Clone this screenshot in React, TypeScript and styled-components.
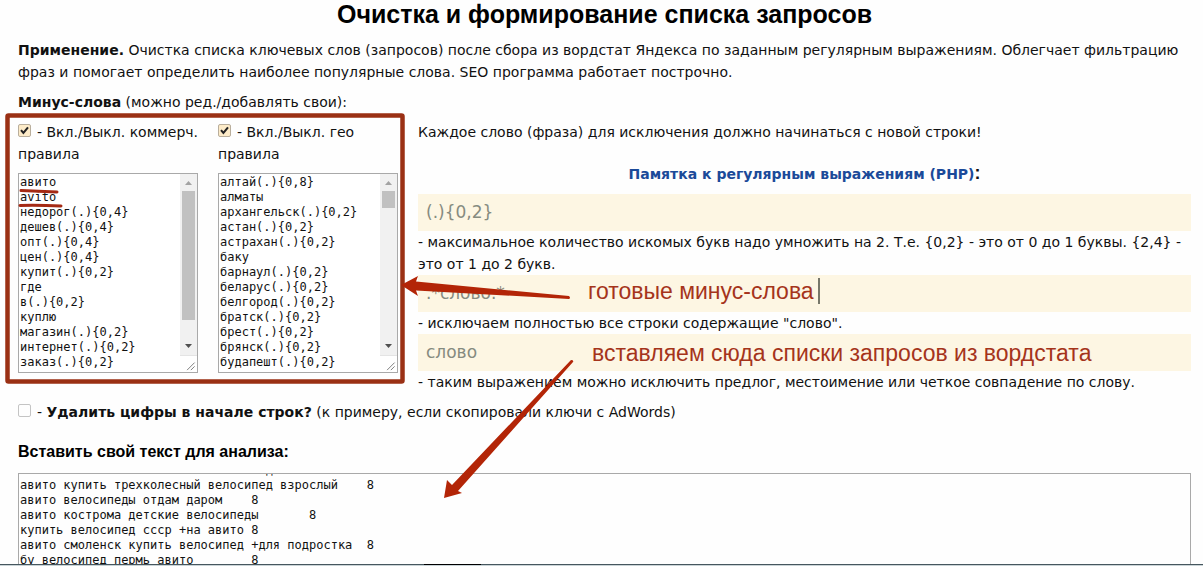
import React, { useLayoutEffect, useRef } from 'react';
import styled, { createGlobalStyle } from 'styled-components';

const GlobalStyle = createGlobalStyle`
  * { box-sizing: border-box; }
  html, body { margin: 0; padding: 0; background: #fefefe; }
  body { font-family: 'DejaVu Sans', Verdana, sans-serif; font-size: 14px; line-height: 22px; color: #111; }
`;

const Page = styled.main`
  position: relative;
  display: flex;
  flex-direction: column;
  height: 100vh;
  min-height: 500px;
  overflow: hidden;
  padding: 0 12px 0 18px;
`;

const Title = styled.h1`
  margin: 0 0 11px;
  font: bold 25px/28px 'Liberation Sans', Arial, sans-serif;
  text-align: center;
  color: #000;
`;

const Paragraph = styled.p`
  margin: 0 0 8px;
`;

const Columns = styled.div`
  display: grid;
  grid-template-columns: 200px 200px 1fr;
`;

const RuleLabel = styled.label`
  display: block;
  margin-bottom: 8px;
`;

const TickWrap = styled.span`
  position: relative;
  display: inline-block;
  width: 13px;
  height: 13px;
  margin-right: 6px;
`;

const Tick = styled.input`
  appearance: none;
  display: block;
  width: 13px;
  height: 13px;
  margin: 0;
  border: 1px solid #c4c4c4;
  border-radius: 2px;
  background: #fefefe;
  &:checked { background: #fdebc8; border-color: #b9ae9c; }
  & + svg { display: none; }
  &:checked + svg { display: block; }
`;

const TickMark = styled.svg`
  position: absolute;
  top: 0;
  left: 0;
  pointer-events: none;
`;

const ListFrame = styled.div`
  display: grid;
  grid-template-columns: 1fr 17px;
  width: 180px;
  height: 200px;
  border: 1px solid #a9a9a9;
  background: #fff;
`;

const ListText = styled.textarea`
  display: block;
  width: 100%;
  height: 100%;
  margin: 0;
  padding: 1px;
  border: 0;
  outline: 0;
  resize: none;
  overflow: hidden;
  background: transparent;
  color: #111;
  white-space: pre;
  font: 12px/15px 'DejaVu Sans Mono', monospace;
`;

const MainText = styled(ListText)`
  flex: 1;
  min-height: 90px;
  border: 1px solid #a9a9a9;
  border-bottom: 0;
`;

const Scrollbar = styled.div`
  display: flex;
  flex-direction: column;
  background: #f1f1f1;
`;

const Arrow = styled.svg`
  display: block;
  flex: none;
`;

const Track = styled.div`
  flex: 1;
  padding: 0 2px;
`;

const Thumb = styled.div<{ $size: number }>`
  height: ${(p) => p.$size}px;
  background: #c1c1c1;
`;

const Grip = styled.svg`
  display: block;
  flex: none;
  background: #fff;
  border-top: 1px solid #e4e4e4;
`;

const MemoTitle = styled.h2`
  margin: 19px 0 10px;
  font: bold 18px/22px 'Liberation Sans', Arial, sans-serif;
  text-align: center;
  a { font: bold 14px/18px 'DejaVu Sans', Verdana, sans-serif; color: #1b4a99; text-decoration: none; }
`;

const Sample = styled.code`
  display: block;
  padding: 8px;
  font: 17px/21px 'DejaVu Sans', Verdana, sans-serif;
  color: #868b80;
  background: #fdf6e3;
`;

const Note = styled.p`
  margin: 0;
`;

const StripLabel = styled.label`
  display: block;
  margin: 8px 0 18px;
`;

const TextLabel = styled.label`
  margin-bottom: 10px;
  font: bold 16px/22px 'Liberation Sans', Arial, sans-serif;
  color: #000;
`;

const Overlay = styled.svg`
  position: absolute;
  top: 0;
  left: 0;
  pointer-events: none;
  text { font: 23px 'Liberation Sans', Arial, sans-serif; fill: #a5341b; }
`;

const BottomEdge = styled.div`
  position: absolute;
  left: 0;
  right: 0;
  bottom: 0;
  height: 2px;
  border-top: 1px solid #46565e;
  background: #c9d3d6;
`;

const commerce = ['авито', 'avito', 'недорог(.){0,4}', 'дешев(.){0,4}', 'опт(.){0,4}', 'цен(.){0,4}', 'купит(.){0,2}', 'где', 'в(.){0,2}', 'куплю', 'магазин(.){0,2}', 'интернет(.){0,2}', 'заказ(.){0,2}'];
const geo = ['алтай(.){0,8}', 'алматы', 'архангельск(.){0,2}', 'астан(.){0,2}', 'астрахан(.){0,2}', 'баку', 'барнаул(.){0,2}', 'беларус(.){0,2}', 'белгород(.){0,2}', 'братск(.){0,2}', 'брест(.){0,2}', 'брянск(.){0,2}', 'будапешт(.){0,2}'];
const queries = [
  'авито мелкие и знаменитые велосипеды\t8',
  'авито купить трехколесный велосипед взрослый\t8',
  'авито велосипеды отдам даром\t8',
  'авито кострома детские велосипеды\t8',
  'купить велосипед ссср +на авито\t8',
  'авито смоленск купить велосипед +для подростка\t8',
  'бу велосипед пермь авито\t8',
  'авито велосипед\t8',
  'авито велосипед бу\t8',
];

function Checkbox({ id, checked }: { id: string; checked?: boolean }) {
  return (
    <TickWrap>
      <Tick type="checkbox" id={id} defaultChecked={checked} />
      <TickMark width="13" height="13" viewBox="0 0 13 13">
        <path d="M3 6.2 L5.4 9 L10 3.4" fill="none" stroke="#222" strokeWidth="2" />
      </TickMark>
    </TickWrap>
  );
}

function RuleList({ id, label, lines, thumb }: { id: string; label: string; lines: string[]; thumb: number }) {
  return (
    <div>
      <RuleLabel htmlFor={id + '-on'}>
        <Checkbox id={id + '-on'} checked />- {label}
        <br />
        правила
      </RuleLabel>
      <ListFrame>
        <ListText aria-label={label} defaultValue={lines.join('\n')} spellCheck={false} />
        <Scrollbar>
          <Arrow width="17" height="17" viewBox="0 0 17 17">
            <path d="M5 11 L8.5 7 L12 11 Z" fill="#a3a3a3" />
          </Arrow>
          <Track>
            <Thumb $size={thumb} />
          </Track>
          <Arrow width="17" height="17" viewBox="0 0 17 17">
            <path d="M5 6 L8.5 10 L12 6 Z" fill="#505050" />
          </Arrow>
          <Grip width="17" height="17" viewBox="0 0 17 17">
            <path d="M7 15 L15 7 M11 15 L15 11" stroke="#777" fill="none" />
          </Grip>
        </Scrollbar>
      </ListFrame>
    </div>
  );
}

export default function App() {
  const mainText = useRef<HTMLTextAreaElement>(null);

  useLayoutEffect(() => {
    if (mainText.current) mainText.current.scrollTop = 12;
  }, []);

  return (
    <Page>
      <GlobalStyle />
      <Title>Очистка и формирование списка запросов</Title>
      <Paragraph>
        <b>Применение.</b> Очистка списка ключевых слов (запросов) после сбора из вордстат Яндекса по заданным
        регулярным выражениям. Облегчает фильтрацию фраз и помогает определить наиболее популярные слова. SEO
        программа работает построчно.
      </Paragraph>
      <Paragraph>
        <b>Минус-слова</b> (можно ред./добавлять свои):
      </Paragraph>
      <Columns>
        <RuleList id="commerce" label="Вкл./Выкл. коммерч." lines={commerce} thumb={129} />
        <RuleList id="geo" label="Вкл./Выкл. гео" lines={geo} thumb={17} />
        <div>
          <Note>Каждое слово (фраза) для исключения должно начинаться с новой строки!</Note>
          <MemoTitle>
            <a href="#memo">Памятка к регулярным выражениям (PHP)</a>:
          </MemoTitle>
          <Sample>{'(.){0,2}'}</Sample>
          <Note>
            {'- максимальное количество искомых букв надо умножить на 2. Т.е. {0,2} - это от 0 до 1 буквы. {2,4} - это от 1 до 2 букв.'}
          </Note>
          <Sample>.*слово.*</Sample>
          <Note>- исключаем полностью все строки содержащие "слово".</Note>
          <Sample>слово</Sample>
          <Note>- таким выражением можно исключить предлог, местоимение или четкое совпадение по слову.</Note>
        </div>
      </Columns>
      <StripLabel htmlFor="strip-digits">
        <Checkbox id="strip-digits" />- <b>Удалить цифры в начале строк?</b> (к примеру, если скопировали ключи с
        AdWords)
      </StripLabel>
      <TextLabel htmlFor="source">Вставить свой текст для анализа:</TextLabel>
      <MainText id="source" ref={mainText} defaultValue={queries.join('\n')} spellCheck={false} />
      <BottomEdge />
      <Overlay width="1203" height="566" viewBox="0 0 1203 566">
        <rect x="7.5" y="115.5" width="395" height="266" rx="1" fill="none" stroke="#9a3014" strokeWidth="4.5" />
        <path d="M21 190.5 Q38 191 57 192 M20 205.5 Q38 205 61 206" fill="none" stroke="#a52a14" strokeWidth="3" strokeLinecap="round" />
        <path d="M401 285 L418 276 L416 281.500 L569 296 Q571 298 569 299 L416 290.500 L418 296 Z" fill="#b32507" />
        <path d="M444 498 L447 480 L452 485 L571 360 Q574 360 573 362 L458 491 L462 493 Z" fill="#b32507" />
        <text x="588" y="299">готовые минус-слова</text>
        <text x="592" y="361">вставляем сюда списки запросов из вордстата</text>
        <rect x="818" y="278" width="2" height="26" fill="#77776a" />
        <rect x="424" y="564" width="57" height="1" fill="#000" />
      </Overlay>
    </Page>
  );
}
